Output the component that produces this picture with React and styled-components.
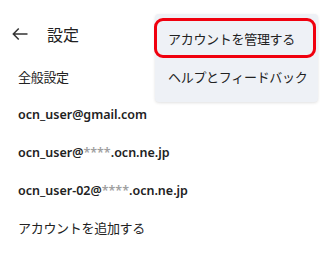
import React from 'react';
import styled, { createGlobalStyle } from 'styled-components';

const Global = createGlobalStyle`
  body {
    margin: 0;
    background: #fff;
    font-family: "Noto Sans", "Noto Sans CJK JP", sans-serif;
    color: #222;
  }
`;

const Page = styled.div`
  position: relative;
  width: 320px;
  height: 280px;
  overflow: hidden;
  background: #fff;
`;

const Header = styled.div`
  display: flex;
  align-items: center;
  height: 58px;
  padding: 10px 0 0 10px;
  box-sizing: border-box;
  gap: 17px;
`;

const Title = styled.h1`
  margin: 0;
  font-size: 16px;
  font-weight: 400;
`;

const List = styled.div`
  display: flex;
  flex-direction: column;
`;

const Row = styled.div`
  display: flex;
  align-items: center;
  height: ${(p) => p.$h || 38}px;
  padding-left: 18px;
  font-size: ${(p) => (p.$bold ? 12.5 : 13)}px;
  font-weight: ${(p) => (p.$bold ? 600 : 400)};
  letter-spacing: ${(p) => (p.$bold ? 0 : -0.3)}px;
`;

const Mask = styled.span`
  color: #a0a0a0;
`;

const Menu = styled.div`
  position: absolute;
  top: 14px;
  left: 155px;
  width: 163px;
  height: 88px;
  background: #eef1f6;
  border-radius: 4px;
  box-shadow: 0 1px 3px rgba(0, 0, 0, 0.12);
  display: flex;
  flex-direction: column;
  padding-top: 4px;
  box-sizing: border-box;
`;

const MenuItem = styled.div`
  display: flex;
  align-items: center;
  height: ${(p) => (p.$active ? 40 : 36)}px;
  margin: ${(p) => (p.$active ? '0 2px 0 -1px' : '0')};
  padding-left: ${(p) => (p.$active ? 11 : 13)}px;
  font-size: 13px;
  letter-spacing: -0.3px;
  border: ${(p) => (p.$active ? '3px solid #f0000e' : '0')};
  border-radius: 9px;
  box-sizing: border-box;
`;

const Back = () => (
  <svg width="20" height="20" viewBox="0 0 24 24" fill="none" stroke="#333" strokeWidth="1.8">
    <path d="M21 12H4M10.5 5.5 4 12l6.5 6.5" />
  </svg>
);

const Email = ({ user, masked }) => (
  <Row $bold>
    {user}
    {masked ? (
      <>
        @<Mask>****</Mask>.ocn.ne.jp
      </>
    ) : (
      '@gmail.com'
    )}
  </Row>
);

export default function App() {
  return (
    <Page>
      <Global />
      <Header>
        <Back />
        <Title>設定</Title>
      </Header>
      <List>
        <Row $h={37}>全般設定</Row>
        <Email user="ocn_user" />
        <Email user="ocn_user" masked />
        <Email user="ocn_user-02" masked />
        <Row $h={36}>アカウントを追加する</Row>
      </List>
      <Menu>
        <MenuItem $active>アカウントを管理する</MenuItem>
        <MenuItem>ヘルプとフィードバック</MenuItem>
      </Menu>
    </Page>
  );
}
